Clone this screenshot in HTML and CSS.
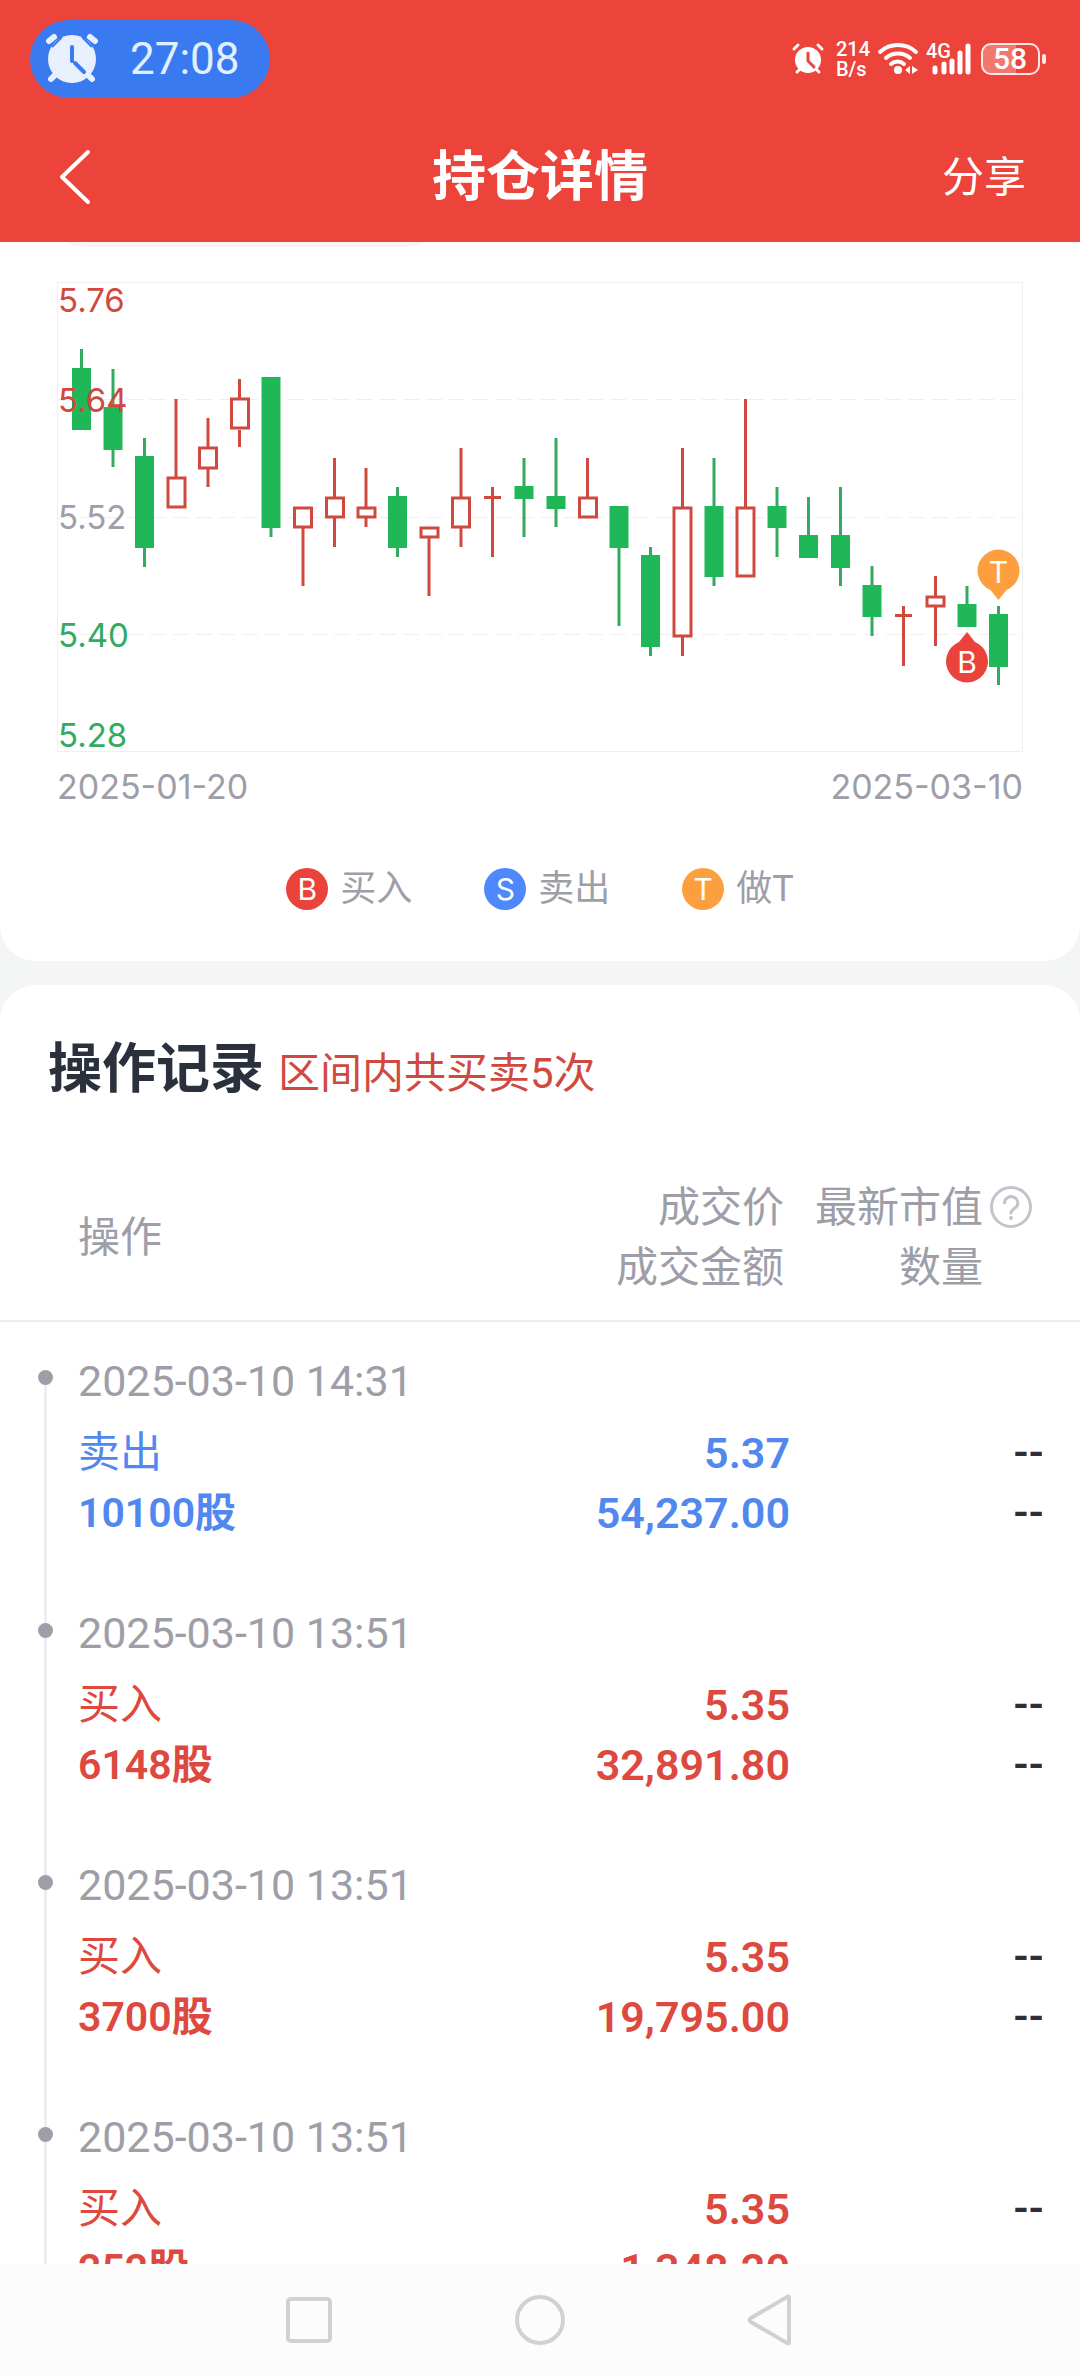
FILE: index.html
```html
<!DOCTYPE html>
<html lang="zh-CN">
<head>
<meta charset="utf-8">
<meta name="viewport" content="width=device-width, initial-scale=1">
<title>持仓详情</title>
<link rel="stylesheet" href="styles.css">
</head>
<body>
<div class="app">
  <header class="top">
    <div class="status">
      <div class="timer">
        <svg width="52" height="50" viewBox="0 0 52 50" aria-hidden="true">
          <g stroke="#e8f0fe" stroke-width="6" stroke-linecap="round"><path d="M3 7l5-4M44 3l5 4M5 45l6-6M46 45l-6-6"/></g>
          <circle cx="26" cy="25" r="24" fill="#e8f0fe"/>
          <path d="M6 13L16 3M36 3l10 10" stroke="#3a7af0" stroke-width="2"/>
          <path d="M26 13v14M29 29l9 9" stroke="#3a7af0" stroke-width="4" stroke-linecap="round"/>
        </svg>
        <span>27:08</span>
      </div>
      <div class="indicators">
        <svg width="32" height="32" viewBox="0 0 32 32" aria-hidden="true">
          <path d="M2 6l4-4M26 2l4 4M5 29l4-4M27 29l-4-4" stroke="#fff" stroke-width="3" stroke-linecap="round"/>
          <circle cx="16" cy="17" r="13" fill="#fff"/>
          <path d="M16 10v8l6 6" stroke="#ec433b" stroke-width="3" fill="none" stroke-linecap="round"/>
        </svg>
        <span class="speed">214<br>B/s</span>
        <svg width="40" height="32" viewBox="0 0 40 32" aria-hidden="true">
          <g fill="none" stroke="#fff" stroke-width="4" stroke-linecap="round"><path d="M2 9a27 27 0 0 1 36 0M8 15a18 18 0 0 1 24 0M13 21a10 10 0 0 1 13 0"/></g>
          <circle cx="20" cy="27" r="4" fill="#fff"/>
          <path d="M32 23v8l-5-4zM34 23v8l6-4z" fill="#fff"/>
        </svg>
        <svg width="46" height="44" viewBox="0 -6 46 44" aria-hidden="true">
          <text class="net" x="0" y="15">4G</text>
          <path d="M9 25v4M18 21v8M26 18v11M34 10v19M42 3v26" stroke="#fff" stroke-width="5" stroke-linecap="round"/>
        </svg>
        <svg class="battery" width="68" height="40" viewBox="0 -3 68 40" role="img" aria-label="58%">
          <path d="M36 2v30H11a9 9 0 0 1-9-9V11a9 9 0 0 1 9-9z" fill="#f1776f"/>
          <rect x="2" y="2" width="57" height="30" rx="9" fill="none" stroke="#ffe9e7" stroke-width="2"/>
          <rect x="62" y="12" width="4" height="10" rx="2" fill="#ffe9e7"/>
          <text x="30" y="27" text-anchor="middle">58</text>
        </svg>
      </div>
    </div>
    <div class="bar">
      <button class="back" type="button" aria-label="返回">
        <svg width="32" height="56" viewBox="0 0 32 56"><path d="M29 2L3 27l26 25" fill="none" stroke="#fff" stroke-width="4" stroke-linecap="round" stroke-linejoin="round"/></svg>
      </button>
      <h1>持仓详情</h1>
      <button class="share" type="button">分享</button>
    </div>
  </header>

  <main>
    <section class="card chart-card">
      <div class="chip"></div>
      <svg class="chart" viewBox="57 282 967 471" role="img" aria-label="K线图">
        <g class="grid">
          <rect x="57.5" y="282.5" width="965" height="469"/>
          <path d="M58 399.5H1022M58 517.5H1022M58 634.5H1022" stroke-dasharray="16 7"/>
        </g>
        <g class="down">
          <path class="wick" d="M81.5 349V430M113 369V467M144.5 438V567M271 377V537M397.5 487V557M524 458V537M556 438V527M619 506V626M650.5 547V656M714 458V586M777 487V557M808.5 497V558M840.5 487V586M872 566V636M967 586V627M998.5 606V685"/>
          <path d="M72 368h19v62h-19zM103.5 407h19v43h-19zM135 456h19v92h-19zM261.5 377h19v151h-19zM388 496h19v52h-19zM514.5 486h19v13h-19zM546.5 496h19v13h-19zM609.5 506h19v42h-19zM641 555h19v92h-19zM704.5 506h19v71h-19zM767.5 506h19v22h-19zM799 535h19v23h-19zM831 535h19v33h-19zM862.5 585h19v32h-19zM957.5 604h19v23h-19zM989 614h19v53h-19z"/>
        </g>
        <g class="up">
          <path d="M176 399V477M208 418V447M208 469V487M239.5 379V398M239.5 430V447M303 528V586M334.5 458V497M334.5 518V547M366 468V507M366 518V527M429 538V596M461 448V497M461 528V547M492.5 487V557M484 497.5H501M587.5 458V497M682.5 448V507M682.5 637V656M745.5 399V507M903.5 606V666M895 615.5H912M935.5 576V596M935.5 607V646"/>
          <path d="M168 478h17v29h-17zM199.5 448h17v20h-17zM231.5 399h17v29h-17zM294.5 508h17v19h-17zM326.5 498h17v19h-17zM358 508h17v9h-17zM421 528h17v9h-17zM452.5 498h17v29h-17zM579.5 498h17v19h-17zM674 508h17v128h-17zM737 508h17v68h-17zM927 597h17v9h-17z"/>
        </g>
        <g class="axis">
          <text class="rise" x="58" y="312">5.76</text>
          <text class="rise" x="58" y="412">5.64</text>
          <text class="flat" x="58" y="529">5.52</text>
          <text class="fall" x="58" y="647">5.40</text>
          <text class="fall" x="58" y="747">5.28</text>
        </g>
        <g class="pin">
          <path d="M998.5 600l-8-10a21 21 0 1 1 16 0z" fill="#fd9f3e"/>
          <text x="998.5" y="583">T</text>
          <path d="M967 632l-8 10a21 21 0 1 0 16 0z" fill="#e9433b"/>
          <text x="967" y="673">B</text>
        </g>
      </svg>
      <div class="range"><span>2025-01-20</span><span>2025-03-10</span></div>
      <ul class="legend">
        <li><i class="tag buy">B</i>买入</li>
        <li><i class="tag sell">S</i>卖出</li>
        <li><i class="tag both">T</i>做T</li>
      </ul>
    </section>

    <section class="card records">
      <div class="heading"><h2>操作记录</h2><p>区间内共买卖5次</p></div>
      <table>
        <colgroup><col><col class="c-price"><col class="c-value"></colgroup>
        <thead>
          <tr>
            <th>操作</th>
            <th class="price">成交价<br>成交金额</th>
            <th>
              <div class="value-head">
                <span>最新市值<br>数量</span>
                <button class="help" type="button" aria-label="说明">
                  <svg width="42" height="42" viewBox="0 0 42 42"><circle cx="21" cy="20" r="19.5" fill="none" stroke="#c3c4cb" stroke-width="3"/><path d="M14.5 16a6.7 6.2 0 1 1 10.5 5c-2.5 1.7-4 2.6-4 5" fill="none" stroke="#c3c4cb" stroke-width="3" stroke-linecap="round"/><circle cx="21" cy="31" r="2" fill="#c3c4cb"/></svg>
                </button>
              </div>
            </th>
          </tr>
        </thead>
        <tbody class="sold">
          <tr class="when"><td colspan="3"><time>2025-03-10 14:31</time></td></tr>
          <tr class="deal"><td>卖出<b class="shares">10100股</b></td><td class="sum"><b>5.37</b><b>54,237.00</b></td><td class="none"><b>--</b><b>--</b></td></tr>
        </tbody>
        <tbody class="bought">
          <tr class="when"><td colspan="3"><time>2025-03-10 13:51</time></td></tr>
          <tr class="deal"><td>买入<b class="shares">6148股</b></td><td class="sum"><b>5.35</b><b>32,891.80</b></td><td class="none"><b>--</b><b>--</b></td></tr>
        </tbody>
        <tbody class="bought">
          <tr class="when"><td colspan="3"><time>2025-03-10 13:51</time></td></tr>
          <tr class="deal"><td>买入<b class="shares">3700股</b></td><td class="sum"><b>5.35</b><b>19,795.00</b></td><td class="none"><b>--</b><b>--</b></td></tr>
        </tbody>
        <tbody class="bought">
          <tr class="when"><td colspan="3"><time>2025-03-10 13:51</time></td></tr>
          <tr class="deal"><td>买入<b class="shares">252股</b></td><td class="sum"><b>5.35</b><b>1,348.20</b></td><td class="none"><b>--</b><b>--</b></td></tr>
        </tbody>
      </table>
    </section>
  </main>

  <nav class="system">
    <button type="button" aria-label="最近任务"><svg width="52" height="52" viewBox="0 0 52 52"><rect x="5" y="5" width="42" height="42" rx="3"/></svg></button>
    <button type="button" aria-label="主屏幕"><svg width="52" height="52" viewBox="0 0 52 52"><circle cx="26" cy="26" r="23"/></svg></button>
    <button type="button" aria-label="返回"><svg width="52" height="52" viewBox="0 0 52 52"><path d="M44 3v46q0 1-2 0L6 28q-3-2 0-4L42 3q2-1 2 0z"/></svg></button>
  </nav>
</div>
</body>
</html>
```
FILE: styles.css
```css
* { box-sizing: border-box; }
body {
  margin: 0;
  background: #f4f6f5;
  color: #2a303c;
  font-family: Roboto, "Noto Sans CJK SC", sans-serif;
  font-size: 42px;
  line-height: 60px;
}
h1, h2, p, ul { margin: 0; padding: 0; }
button {
  padding: 0;
  border: 0;
  background: none;
  color: inherit;
  font: inherit;
  line-height: inherit;
}
svg { display: block; overflow: visible; }
.app { display: flex; flex-direction: column; height: 100vh; }

/* Header */
.top { flex: none; background: #ec433b; color: #fff; }
.status {
  display: flex;
  justify-content: space-between;
  align-items: center;
  padding: 20px 32px 0 30px;
}
.timer {
  display: flex;
  align-items: center;
  gap: 32px;
  width: 240px;
  height: 78px;
  padding-left: 16px;
  border-radius: 39px;
  background: #3a7af0;
  color: #e0f0ff;
  font-size: 44px;
}
.indicators { display: flex; align-items: center; gap: 8px; }
.speed {
  margin-left: 4px;
  font-size: 20px;
  font-weight: 500;
  line-height: 20px;
}
.net { font-size: 20px; font-weight: 500; fill: #fff; }
.battery { font-size: 30px; font-weight: 500; fill: #fff; }
.bar {
  display: grid;
  grid-template-columns: 1fr auto 1fr;
  align-items: center;
  height: 144px;
  padding: 16px 54px 0;
}
.bar h1 { font-size: 54px; font-weight: 700; }
.back { justify-self: start; padding-left: 5px; }
.share { justify-self: end; }

/* Chart */
main { flex: 1; min-height: 0; overflow-y: auto; scrollbar-width: none; }
.card { background: #fff; border-radius: 36px; }
.chart-card { padding-bottom: 51px; border-radius: 0 0 36px 36px; }
.chip {
  width: 33%;
  height: 5px;
  margin-left: 68px;
  border-radius: 0 0 20px 20px / 0 0 5px 5px;
  background: #f5f5f6;
}
.chart { width: calc(100% - 113px); margin: 35px 56px 0 57px; }
.grid { fill: none; stroke: #efeff0; stroke-width: 1; }
.down { fill: #20b759; }
.down .wick { fill: none; stroke: #32ab61; stroke-width: 3; }
.up { fill: #fff; stroke: #d0493f; stroke-width: 3; }
.axis { font-family: Inter, sans-serif; font-size: 33px; }
.axis .rise { fill: #d0493f; }
.axis .flat { fill: #9d9ea8; }
.axis .fall { fill: #32ab61; }
.pin text {
  fill: #fff;
  font-family: Inter, sans-serif;
  font-size: 30px;
  text-anchor: middle;
}
.range {
  display: flex;
  justify-content: space-between;
  padding: 14px 57px 0;
  color: #9d9ea8;
  font-family: Inter, sans-serif;
  font-size: 34px;
  line-height: 40px;
}
.legend {
  display: flex;
  justify-content: center;
  gap: 72px;
  margin-top: 61px;
  color: #9d9ea8;
  font-size: 36px;
  line-height: 42px;
  list-style: none;
}
.legend li { display: flex; gap: 12px; }
.tag {
  width: 42px;
  height: 42px;
  border-radius: 50%;
  color: #fff;
  font-family: Inter, sans-serif;
  font-size: 30px;
  font-style: normal;
  text-align: center;
}
.buy { background: #e9433b; }
.sell { background: #4d88fc; }
.both { background: #fd9f3e; }

/* Records */
.records { margin-top: 24px; padding-top: 55px; }
.heading {
  display: flex;
  align-items: baseline;
  gap: 14px;
  height: 60px;
  padding-left: 48px;
}
.heading h2 { font-size: 54px; font-weight: 700; }
.heading p { color: #d0493f; }
table {
  width: 100%;
  margin-top: 78px;
  border-collapse: collapse;
  table-layout: fixed;
}
.c-price { width: 240px; }
.c-value { width: 290px; }
th {
  padding: 0 0 22px;
  border-bottom: 2px solid #ededee;
  color: #9d9ea8;
  font-weight: 400;
  text-align: right;
}
th:first-child { padding-left: 78px; text-align: left; }
th.price { padding-right: 6px; }
.value-head {
  display: flex;
  justify-content: flex-end;
  gap: 7px;
  padding-right: 48px;
  white-space: nowrap;
}
.help { display: flex; align-items: center; height: 60px; }
tbody { position: relative; }
td { padding: 0; text-align: right; vertical-align: top; }
td:first-child { padding-left: 78px; text-align: left; }
.when td { padding-top: 29px; color: #9d9ea8; }
.deal td { padding-top: 12px; padding-bottom: 31px; }
time { display: block; font-size: 43px; }
b { display: block; font-weight: 600; }
.shares { font-size: 41px; }
.sum { font-size: 43px; }
.sold { color: #5188ef; }
.bought { color: #dd483f; }
.none { color: #2a303c; }
.deal .none { padding-right: 36px; }
tbody::before, tbody::after { content: ""; position: absolute; }
tbody::before { left: 44px; top: 0; bottom: 0; width: 3px; background: #ededf0; }
.sold::before { top: 56px; }
tbody::after {
  left: 38px;
  top: 49px;
  width: 15px;
  height: 15px;
  border-radius: 50%;
  background: #9d9ea8;
}

/* System navigation */
.system {
  display: flex;
  flex: none;
  justify-content: center;
  align-items: center;
  gap: 179px;
  height: 112px;
  background: #fcfcfc;
}
.system svg { fill: none; stroke: #d1d1d1; stroke-width: 4; }
```
